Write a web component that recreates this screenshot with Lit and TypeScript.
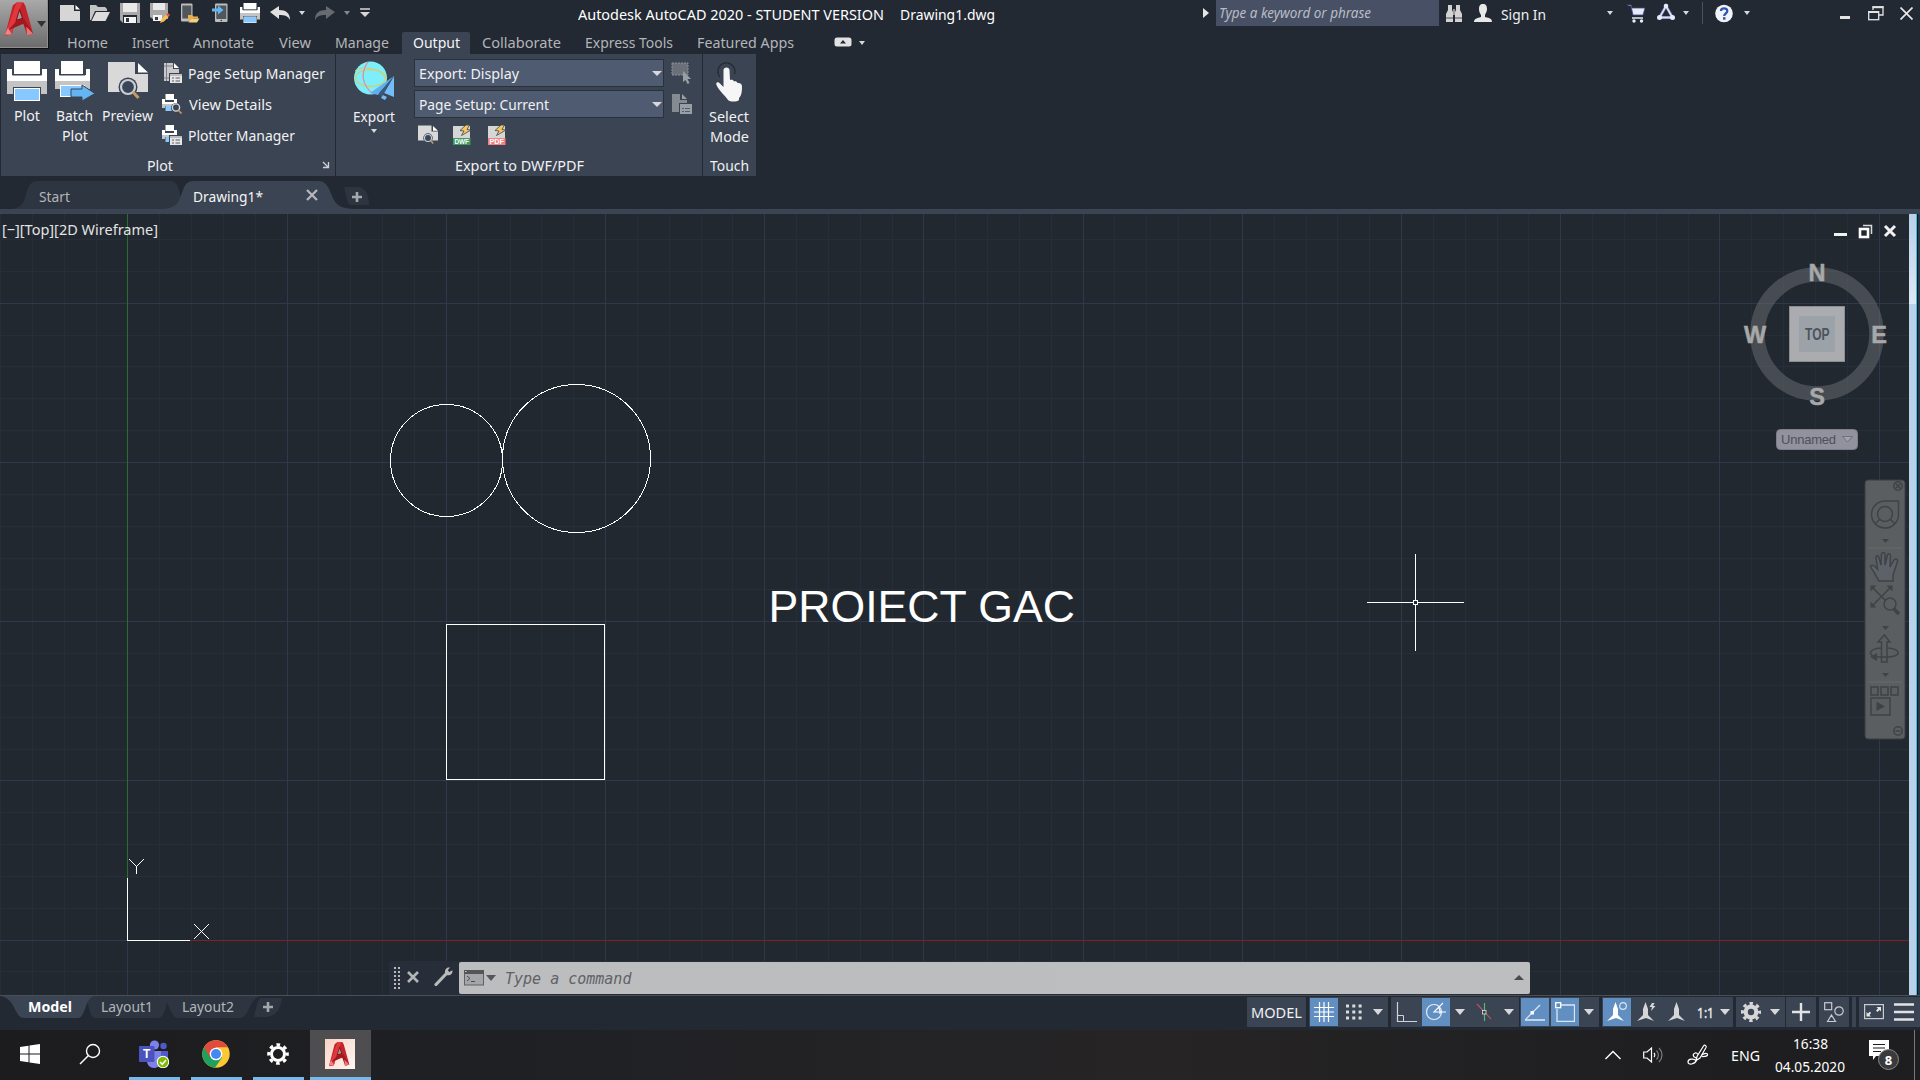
import { LitElement, html, css, svg, TemplateResult, SVGTemplateResult } from "lit";
import { customElement, property, query } from "lit/decorators.js";
import { classMap } from "lit/directives/class-map.js";

/** One line of text squeezed or stretched to a given advance width. */
@customElement("fit-text")
class FitText extends LitElement {
  static styles = css`
    :host { display: inline-block; white-space: nowrap; flex: none; text-align: left; }
    span { display: inline-block; transform-origin: 0 50%; }
  `;
  @property({ type: String }) text = "";
  @property({ type: Number }) w = 0;
  @query("span") private label!: HTMLSpanElement;
  render() {
    return html`<span>${this.text}</span>`;
  }
  updated() {
    this.style.width = `${this.w}px`;
    this.label.style.transform = "none";
    const natural = this.label.getBoundingClientRect().width;
    if (natural > 0) this.label.style.transform = `scaleX(${this.w / natural})`;
  }
}

const t = (text: string, w: number, cls = "") =>
  html`<fit-text class=${cls} .text=${text} .w=${w}></fit-text>`;

const icon = (w: number, h: number, body: SVGTemplateResult, cls = "") =>
  html`<svg class=${cls} width=${w} height=${h} viewBox="0 0 ${w} ${h}" fill="none">${body}</svg>`;

const caret = (w = 6, h = 4, fill = "#d6d8db") =>
  icon(w, h, svg`<path d="M0 0H${w}L${w / 2} ${h}Z" fill=${fill}/>`);

/* ---------- quick access icons (20 x 20) ---------- */
const qNew = icon(20, 20, svg`<path d="M0 2H14V8H20V18H0Z" fill="#d6d6d6"/><path d="M15.500 2L20 6.500H15.500Z" fill="#fff"/>`);
const qOpen = icon(20, 20, svg`<path d="M0 2H6L8 4H15L17 6V8H5L1 17H0Z" fill="#c4c4c4"/><path d="M6 9H20L15.500 18H1.500Z" fill="#dcdcdc"/>`);
const qSave = icon(20, 20, svg`<path d="M0 0H20V20H3L0 17Z" fill="#a9a9a9"/><path d="M3 0H17V9H3Z" fill="#e9e9e9"/><path d="M3 12H17V20H3Z" fill="#222933"/><path d="M4 14H16V20H4Z" fill="#f4f4f4"/><path d="M6 15H9V19H6Z" fill="#333a44"/>`);
const qSaveAs = icon(20, 20, svg`<path d="M0 0H18V16H3L0 14Z" fill="#a9a9a9"/><path d="M3 0H15V7H3Z" fill="#e9e9e9"/><path d="M3 12H12V18H3Z" fill="#f4f4f4"/><path d="M5 14H8V17H5Z" fill="#333a44"/><path d="M10 20L11.500 16L16 11.500L18.500 14L14 18.500Z" fill="#f4bf55"/><path d="M16 11.500L18 10L20 12L18.500 14Z" fill="#e2584b"/>`);
const qOpenWeb = icon(20, 20, svg`<rect x="1" y="0.500" width="11.500" height="18" rx="1" fill="#bdbdbd"/><rect x="2.300" y="2.500" width="9" height="13" fill="#51555c"/><path d="M8 12H12L13.500 13.500H18V15.500H11L8 19Z" fill="#eab04c"/><path d="M12 15.500H19.500L17 19.500H8.500Z" fill="#f6cf7f"/>`);
const qSaveWeb = icon(20, 20, svg`<rect x="5" y="0.500" width="12.500" height="18.500" rx="1" fill="#bdbdbd"/><rect x="6.300" y="2.500" width="10" height="13.500" fill="#51555c"/><path d="M2 5.500H8V2.500L13.500 7L8 11.500V8.500H2Z" fill="#63b5f4"/><circle cx="11.300" cy="17.500" r="0.800" fill="#333"/>`);
const printer = (s: number, extra: SVGTemplateResult = svg``) =>
  html`<svg width=${s} height=${s} viewBox="0 0 40 40" fill="none">
    <path d="M0 8H5V14H35V8H40V20H0Z" fill="#fff"/><path d="M7 0H33V13H7Z" fill="#fff"/>
    <path d="M6 8V14H34V8" stroke="#3b4453" stroke-width="1.200"/>
    <path d="M0 20H40V33H34V26H6V33H0Z" fill="#c4c4c4"/><path d="M7 27H33V40H7Z" fill="#fff"/><path d="M8 28H32V39H8Z" fill="#86c8ff"/>${extra}</svg>`;
const undo = (c: string, flip: boolean) =>
  icon(20, 20, svg`<path transform=${flip ? "matrix(-1 0 0 1 20 0)" : ""} d="M0 9L9 3V7C16 7 20 10 20 17C18 13 15 12 9 12V16Z" fill=${c}/>`);

/* ---------- app logo ---------- */
const logoA = (w: number, h: number) => html`<svg width=${w} height=${h} viewBox="0 0 30 34" fill="none">
  <path d="M8 3L12 0H19L21 3L29 32L23 34L19 22H10L7 33L0 34Z" fill="#c2242b"/>
  <path d="M12 0H18L9 24L7 33L0 34Z" fill="#e0383c"/>
  <path d="M15 6L19 17L11 19Z" fill="#7e1418"/><path d="M15 9L17.500 16L12.500 17.500Z" fill="#a3989a"/>
  <path d="M19 22L3 29L12 19L20 17L29 32L24 33Z" fill="#a3181e"/><path d="M22 25L29 32L23 34Z" fill="#e8767a"/><path d="M3 26L7 33H0Z" fill="#e8898b"/></svg>`;

/* ---------- ribbon icons ---------- */
const sheetLens = (s: number) => html`<svg width=${s} height=${s} viewBox="0 0 40 40" fill="none">
  <path d="M0 1H27V13H40V31H0Z" fill="#d9d9d9"/><path d="M30 2L40 11.500H30Z" fill="#fff"/>
  <circle cx="20" cy="26" r="9.500" fill="#3b4453"/><circle cx="20" cy="26" r="7" fill="#39465a" stroke="#c9ced5" stroke-width="2.200"/>
  <path d="M25 31L30.500 37" stroke="#c79a63" stroke-width="3"/></svg>`;
const listBox = svg`<path d="M7 10H20V20H7Z" fill="#3b4453"/><path d="M8 11H20V20H8Z" fill="#e6e6e6"/><path d="M8 11H20V13H8Z" fill="#bdbdbd"/><path d="M10 15H12M13.500 15H18M10 18H12M13.500 18H18" stroke="#555c68"/>`;
const sPage = icon(20, 20, svg`<path d="M2 0H11V6H17V18H2Z" fill="#c9c9c9"/><path d="M12 0L17 5H12Z" fill="#fff"/><path d="M4.500 0V18M2 3H11M2 15H8" stroke="#7b818b"/>${listBox}`);
const smallPrinter = svg`<path d="M0 5H3V8H12V5H15V10H0Z" fill="#fff"/><path d="M3.500 0H12V6H3.500Z" fill="#fff"/><path d="M0 10H15V14H12V12H3V14H0Z" fill="#c4c4c4"/><path d="M3.500 12H11.500V17H3.500Z" fill="#86c8ff"/>`;
const sView = icon(20, 20, svg`${smallPrinter}<circle cx="14" cy="14" r="5" fill="#3b4453"/><circle cx="14" cy="13.500" r="3.600" stroke="#d3d6da" stroke-width="1.400"/><path d="M16.500 16.500L19.500 19.500" stroke="#c79a63" stroke-width="1.600"/>`);
const sPlotter = icon(20, 20, svg`${smallPrinter}${listBox}`);
const globe = icon(40, 40, svg`<circle cx="16.500" cy="17" r="16.500" fill="#7deefa"/>
  <ellipse cx="16.500" cy="17" rx="15" ry="8.500" stroke="#d3cf72" stroke-width="1.300"/><path d="M1 10C8 5 26 6 32 18" stroke="#d3cf72"/>
  <path d="M14 1C6 12 8 24 19 33" stroke="#e08a9a" stroke-width="1.200"/>
  <path d="M40 15V36L30 32Z" fill="#72bdf6"/><path d="M40 15L16 32L24 34Z" fill="#5eaef0"/><path d="M40 15L25 32L27 37Z" fill="#3b5878"/><path d="M27 37L31 39L33 36L29 34Z" fill="#72bdf6"/>`);
const selRect = icon(22, 22, svg`<rect x="1" y="1" width="16" height="12" fill="#6b7078" stroke="#8d929a" stroke-dasharray="2 1"/><path d="M12 9L20 17H16.500L18.500 21L16.500 22L14.500 18L12 20Z" fill="#9a9fa6"/>`);
const pageOff = icon(22, 22, svg`<path d="M1 1H9V7H16V19H1Z" fill="#868a91"/><path d="M11 1L16 6H11Z" fill="#9a9fa6"/><path d="M8 10H21V21H8Z" fill="#3b4453"/><path d="M9 11H21V21H9Z" fill="#9a9fa6"/><path d="M11 15.500H13M14 15.500H19M11 18.500H13M14 18.500H19" stroke="#555c68"/>`);
const filePub = (label: string, c: string) => html`<svg width="20" height="20" viewBox="0 0 20 20" fill="none">
  <path d="M0 1H17V13H0Z" fill="#d6d6d6"/><path d="M13 0L7 5.500L11 6L8.500 10.500L18 5L14 4.500L16.500 0Z" fill="#f7c75e" stroke="#3b4453" stroke-width="0.800"/>
  <rect x="0" y="13" width="17.500" height="7" fill=${c}/><text class="tag" x="8.700" y="18.900" text-anchor="middle" textLength="14.500" lengthAdjust="spacingAndGlyphs">${label}</text></svg>`;
const hand = icon(28, 42, svg`<path d="M5 16A8.500 8.500 0 1 1 19.500 13" stroke="#262b33" stroke-width="1.300"/>
  <path d="M8.500 9C8.500 5.500 14.500 5.500 14.500 9L15 19C17 18.500 18.500 19 19 20.500C20.500 19.800 22 20.500 22.500 22C24.500 21.500 27 22.500 27 25.500C27 32 26 35 24 37V39C22 41 15 41 13 39C10.500 35 4 30 1.500 24C0.500 21 3 20.500 5 22.500L8.500 26Z" fill="#f6f6f6"/>`);

/* ---------- status bar icons ---------- */
const stGrid = icon(20, 20, svg`<path d="M5.500 0V20M10 0V20M14.500 0V20M0 5.500H20M0 10H20M0 14.500H20" stroke="#fff" stroke-width="1.200"/>`);
const stSnap = icon(16, 16, svg`<path d="M0 2H16M0 8H16M0 14H16" stroke="#dcdcdc" stroke-width="3" stroke-dasharray="3 3.300"/>`);
const stOrtho = icon(22, 22, svg`<path d="M1.500 1V20.500H21" stroke="#cfd2d6" stroke-width="1.200"/><path d="M2 14.500H7.500V20" stroke="#cfd2d6"/>`);
const stPolar = icon(22, 22, svg`<circle cx="9" cy="11" r="7.500" stroke="#e6edf5" stroke-width="1.200"/><path d="M21 11H9L18 2M14 7C15 9 15.500 10 15 13" stroke="#fff" stroke-width="1.100"/>`);
const stIso = icon(18, 20, svg`<path d="M2 2L16 17" stroke="#b75660" stroke-width="1.100"/><path d="M9.500 1V19" stroke="#54b877" stroke-width="1.200"/><rect x="7.500" y="8.500" width="3.500" height="3.500" fill="#3b4453" stroke="#ddd" stroke-width="0.800"/>`);
const stTrack = icon(20, 20, svg`<path d="M0 18H20" stroke="#dbe6f2" stroke-width="1.600"/><path d="M0 18L15 3" stroke="#dbe6f2" stroke-width="1.200"/><rect x="5.500" y="9" width="3.500" height="3.500" fill="#fff"/>`);
const stOsnap = icon(20, 20, svg`<path d="M6 3H19.500V19.500H2V7" stroke="#dbe6f2" stroke-width="1.300"/><rect x="0.700" y="0.700" width="5" height="5" stroke="#fff" stroke-width="1.300"/>`);
const personA = (c: string) => svg`<path d="M8.500 0L11 7V13L17 19L9 16L0 19L6 13V7Z" fill=${c}/>`;
const stAnno = icon(20, 20, svg`${personA("#fff")}<circle cx="16" cy="4" r="3.300" stroke="#dbe6f2" stroke-width="1.200"/>`);
const stAuto = icon(20, 20, svg`${personA("#d6d6d6")}<path d="M15 1L12.500 5H15L14 9L18.500 4H16L17.500 1Z" fill="#d6d6d6"/>`);
const stScale = icon(18, 20, svg`${personA("#d6d6d6")}`);
const gearShape = (c: string, hole: string) => svg`
  <circle cx="10" cy="10" r="8.500" stroke=${c} stroke-width="3.200" stroke-dasharray="3.340 3.340" stroke-dashoffset="1.700"/>
  <circle cx="10" cy="10" r="7.400" fill=${c}/><circle cx="10" cy="10" r="3.200" fill=${hole}/>`;
const stGear = icon(20, 20, gearShape("#d6d6d6", "#3b4453"));
const stPlus = icon(20, 20, svg`<path d="M10 1V19M1 10H19" stroke="#e3e3e3" stroke-width="2.400"/>`);
const stShapes = icon(20, 20, svg`<rect x="0.700" y="0.700" width="7" height="7" stroke="#c9ccd0" stroke-width="1.200"/><circle cx="15" cy="9" r="4.200" stroke="#c9ccd0" stroke-width="1.200"/><path d="M7.500 13L11.500 19.500H3.500Z" stroke="#c9ccd0" stroke-width="1.200"/>`);
const stFull = icon(20, 16, svg`<rect x="0.600" y="0.600" width="18.800" height="14" stroke="#c9ccd0" stroke-width="1.200"/><path d="M12.500 3H17V7.500L15.500 6L13.500 8L12 6.500L14 4.500ZM2.500 8L4 9.500L6 7.500L7 9L5.500 11L7 12.500H2.500Z" fill="#e6e6e6"/>`);
const stMenu = icon(20, 18, svg`<path d="M0 1.500H20M0 9H20M0 16.500H20" stroke="#e3e3e3" stroke-width="2.400"/>`);

/* ---------- taskbar icons ---------- */
const tbStart = icon(20, 20, svg`<path d="M0 3L8.500 1.800V9.500H0ZM9.500 1.600L20 0V9.500H9.500ZM0 10.500H8.500V18.200L0 17ZM9.500 10.500H20V20L9.500 18.400Z" fill="#fff"/>`);
const tbSearch = icon(22, 22, svg`<circle cx="14" cy="8" r="6.500" stroke="#fff" stroke-width="1.400"/><path d="M9.500 12.500L1 21" stroke="#fff" stroke-width="1.500"/>`);
const tbTeams = icon(30, 28, svg`<circle cx="15.500" cy="5" r="4.600" fill="#7b83eb"/><circle cx="24.500" cy="6" r="3.200" fill="#5059c9"/><path d="M20 11H29V19C29 22 27 24 24 24H20Z" fill="#5059c9"/><path d="M8 11H22V21C22 26 18 28 15 28C11 28 8 25 8 21Z" fill="#7b83eb"/>
  <rect x="0" y="6" width="15.500" height="16" rx="1" fill="#4b53bc"/><text class="teams" x="7.700" y="18" text-anchor="middle">T</text>
  <circle cx="24" cy="22" r="6.200" fill="#fff"/><circle cx="24" cy="22" r="5.200" fill="#7fba00"/><path d="M21 22L23.300 24.300L27 20" stroke="#fff" stroke-width="1.500"/>`);
const tbChrome = icon(28, 28, svg`<circle cx="14" cy="14" r="13.700" fill="#fcc934"/><path d="M14 14L2.100 7.150A13.700 13.700 0 0 0 13 27.650L20 17.500Z" fill="#1fa15d"/><path d="M2.100 7.150A13.700 13.700 0 0 1 25.900 7.150H14L8 17.300Z" fill="#e04a3f"/><circle cx="14" cy="14" r="6.300" fill="#fff"/><circle cx="14" cy="14" r="5" fill="#4688f1"/>`);
const tbGear = icon(22, 22, svg`<circle cx="11" cy="11" r="9.300" stroke="#fff" stroke-width="3" stroke-dasharray="3.650 3.650" stroke-dashoffset="1.800"/><circle cx="11" cy="11" r="6.500" stroke="#fff" stroke-width="3"/>`);
const trChevron = icon(16, 10, svg`<path d="M0.500 9L8 1.500L15.500 9" stroke="#fff" stroke-width="1.400"/>`);
const trSpeaker = icon(20, 18, svg`<path d="M0.700 6H4L8.500 2V16L4 12H0.700Z" stroke="#fff" stroke-width="1.200"/><path d="M11 7C12 8 12 10 11 11" stroke="#fff" stroke-width="1.200"/><path d="M13.500 4.500C16 7 16 11 13.500 13.500M16 2C20 6 20 12 16 16" stroke="#7d7d7d" stroke-width="1.200"/>`);
const trPen = icon(22, 22, svg`<path d="M9 16.500L10 12.500L16.500 2C17.500 0.500 20 1.500 19 3.500L13 14Z" stroke="#fff" stroke-width="1.200"/><path d="M11 10.500C9 7.500 5.500 9.500 6.500 12C7.500 14.500 10.500 12.500 9.500 16C8 20.500 1 21.500 1 18C1 14.500 7 14.500 9 16.500M15 11C17 9 21 8.500 20.500 11C20 13 16 12.500 14.500 12.500" stroke="#fff" stroke-width="1.200"/>`);
const trNote = icon(30, 32, svg`<path d="M0 1H20V17H7L4 21V17H0Z" fill="#fff"/><path d="M4 5.500H16M4 9H16M4 12.500H12" stroke="#1d1d1f" stroke-width="1.200"/><circle cx="19.500" cy="20.500" r="10" fill="#3a3a3c" stroke="#8a8a8a"/><text class="count" x="19.500" y="25.500" text-anchor="middle">8</text>`);

/* ---------- drawing area (canvas origin at window y = 214) ---------- */
const PITCH = 159.2;
const gridLines = () => {
  const out: SVGTemplateResult[] = [];
  for (const major of [false, true]) {
    const cls = major ? "major" : "minor";
    for (let i = -4; i <= 56; i++) {
      if ((i % 5 === 0) !== major) continue;
      const x = Math.round(127.45 + (i * PITCH) / 5) + 0.5;
      if (x < 1909) out.push(svg`<path class=${cls} d="M${x} 0V781"/>`);
    }
    for (let i = -1; i <= 22; i++) {
      if ((i % 5 === 0) !== major) continue;
      const y = Math.round(725.6 - (i * PITCH) / 5) + 0.5;
      if (y > 0) out.push(svg`<path class=${cls} d="M0 ${y}H1909"/>`);
    }
  }
  return out;
};

@customElement("drawing-view")
class DrawingView extends LitElement {
  static styles = css`
    :host { display: grid; height: 781px; background: #212830; position: relative; overflow: hidden; font: 15px/20px "Noto Sans", sans-serif; }
    .space { grid-area: 1 / 1; display: block; }
    .space path, .space rect { shape-rendering: crispEdges; }
    .minor { stroke: #262e39; }
    .major { stroke: #303849; }
    .ent { stroke: #fff; fill: none; }
    circle.ent { shape-rendering: crispEdges; }
    .proj { font: 44.500px "Liberation Sans", Arial, sans-serif; fill: #fff; }
    .label { position: absolute; left: 2px; top: 5px; color: #e4e4e4; }
    .cube { position: absolute; left: 1740px; top: 42px; }
    .cube text { font: bold 23.500px "Liberation Sans", Arial, sans-serif; fill: #a8a8a8; }
    .cube .dir text { stroke: #a8a8a8; stroke-width: 0.500px; }
    .cube .top { font: bold 16px "Liberation Sans", Arial, sans-serif; fill: #4c535c; }
    .cube .ucs { font: 13px "Liberation Sans", Arial, sans-serif; fill: #4d4f5a; }
    .wins { position: absolute; left: 1832px; top: 10px; }
    .nav { position: absolute; left: 1864px; top: 265px; }
    .cmd { position: absolute; left: 389px; top: 747px; width: 1141px; height: 34px; background: #282e39; border-radius: 3px 0 0 0; display: flex; align-items: center; }
    .tools { width: 70px; display: flex; align-items: center; padding-left: 5px; box-sizing: border-box; }
    .tools svg { margin-bottom: 1px; }
    .tools svg:nth-child(2) { margin-left: 7px; margin-bottom: 2px; }
    .tools svg:nth-child(3) { margin-left: 15px; margin-bottom: 3px; }
    .entry { flex: 1; height: 32px; margin-bottom: 1px; background: linear-gradient(90deg, #bcbdbf, #bdbec0); border-radius: 2px; display: flex; align-items: center; gap: 2px; padding: 0 6px 0 5px; box-sizing: border-box; }
    .entry .ph { margin-left: 7px; padding-top: 2px; flex: 1; font: italic 15px/20px "DejaVu Sans Mono", monospace; color: #616265; }
  `;
  render() {
    return html`
      <svg class="space" width="1920" height="781" viewBox="0 0 1920 781" fill="none">
        <defs><linearGradient id="sb" x1="0" x2="0" y1="0" y2="1"><stop offset="0" stop-color="#b9d0ea"/><stop offset="1" stop-color="#dde8f4"/></linearGradient></defs>
        ${gridLines()}
        <path d="M127.500 0V674" stroke="#25702d"/><path d="M190 726.500H1909" stroke="#7b2428"/>
        <path class="ent" d="M127.500 664V726.500H190"/>
        <path class="ent" d="M129 645L136.500 652.500V660M136.500 652.500L144 645M194 710L209 725M209 710L194 725"/>
        <circle class="ent" cx="446.500" cy="246.500" r="56"/><circle class="ent" cx="576.500" cy="244.500" r="74"/>
        <rect class="ent" x="446.500" y="410.500" width="158" height="155"/>
        <text class="proj" x="768.500" y="407.500" textLength="306.500" lengthAdjust="spacingAndGlyphs">PROIECT GAC</text>
        <path class="ent" d="M1367 388.500H1413M1418 388.500H1464M1415.500 340V386M1415.500 391V437"/>
        <rect class="ent" x="1413.500" y="386.500" width="4" height="4"/>
        <rect x="1909" y="0" width="7" height="781" fill="#bad1ea"/><rect x="1909" y="0" width="7" height="90" fill="url(#sb)"/>
        <rect x="1916" y="0" width="1" height="781" fill="#28c4f0"/><rect x="1917" y="0" width="1" height="781" fill="#10141a"/><rect x="1918" y="0" width="2" height="781" fill="#2d3543"/>
      </svg>
      ${t("[−][Top][2D Wireframe]", 156, "label")}
      ${icon(68, 18, svg`<rect x="2" y="9" width="13" height="3" fill="#f2f2f2"/>
        <path d="M31 1.500H39.500V10" stroke="#dcdcdc" stroke-width="1.500"/><rect x="28" y="5" width="8" height="8" stroke="#fff" stroke-width="2.600"/>
        <path d="M53 2L63 12M63 2L53 12" stroke="#f2f2f2" stroke-width="3"/>`, "wins")}
      <svg class="cube" width="160" height="200" viewBox="0 0 160 200" fill="none">
        <circle cx="77" cy="78" r="59.500" stroke="#6a6e73" stroke-opacity="0.530" stroke-width="14.500"/>
        <g class="dir"><text x="77" y="25" text-anchor="middle">N</text><text x="77" y="148.500" text-anchor="middle">S</text>
        <text x="15" y="87" text-anchor="middle">W</text><text x="139" y="87" text-anchor="middle">E</text></g>
        <rect x="49.500" y="50.500" width="55" height="55" fill="#aaacaf" stroke="#8a8d91"/><rect x="59" y="60" width="36" height="36" fill="#9ba3a8"/>
        <text class="top" x="65" y="84" textLength="24.500" lengthAdjust="spacingAndGlyphs">TOP</text>
        <rect x="36.500" y="173.500" width="81" height="20" rx="4" fill="#91929e" stroke="#7d7e8a"/>
        <text class="ucs" x="41" y="188" textLength="55" lengthAdjust="spacing">Unnamed</text>
        <path d="M102.500 180.500H112.500L107.500 186Z" fill="#a0a2b0" stroke="#6f7180"/>
      </svg>
      <svg class="nav" width="42" height="262" viewBox="0 0 42 262" fill="none" stroke="#3f4347" stroke-width="1.500">
        <rect x="1" y="1" width="40" height="259" rx="3" fill="#5a5e61" stroke="#3a3e42" stroke-width="1"/>
        <circle cx="34" cy="7" r="4.200"/><path d="M31.500 4.500L36.500 9.500M36.500 4.500L31.500 9.500"/>
        <path d="M21 22H34.500V36A13.500 13.500 0 1 1 21 22Z"/><circle cx="21" cy="35" r="7.500"/><path d="M15.500 40.500L11 45M26.500 40.500L31 45"/>
        <path d="M18 60H25L21.500 64Z" fill="#3f4347" stroke="none"/><path d="M4 69H38" stroke="#666a6e" stroke-width="1"/>
        <path d="M12 97C10 91 7 91 6.500 87C8 85 11 87 13.500 90L12 79C12 76 14.500 76 15 79L17 86L17.500 75C18 73 20.500 73 21 75V86L23.500 76C24 74 26.500 74.500 26.500 77L26 88L30 81C32 79 34 80.500 33.500 82.500L29 96V102H15Z" fill="#5d6168"/>
        <g transform="translate(0 2)"><path d="M8 125L27 106M8 106L22 120" stroke-width="1.600"/><path d="M6.500 104.500H12.500L6.500 110.500ZM28.500 104.500V110.500L22.500 104.500ZM6.500 126.500V120.500L12.500 126.500Z" fill="#3f4347" stroke="none"/>
        <circle cx="26" cy="123" r="6"/><path d="M30 128L35 133" stroke-width="3.500"/></g>
        <path d="M18 147H25L21.500 151Z" fill="#3f4347" stroke="none"/>
        <g transform="translate(0 2)"><path d="M17.500 181V161H14L20.500 154L26 161H23V181Z"/><path d="M17 167C4 168 3 175 14 176H22C38 176 38 168 24 167"/><path d="M13 172V180L6 176Z" fill="#3f4347" stroke="none"/></g>
        <path d="M18 194H25L21.500 198Z" fill="#3f4347" stroke="none"/><path d="M4 203H38" stroke="#666a6e" stroke-width="1"/>
        <rect x="7" y="208" width="7" height="8"/><rect x="17" y="208" width="7" height="8"/><rect x="27" y="208" width="7" height="8"/>
        <rect x="7" y="219" width="19" height="17"/><path d="M12.500 222.500V232L21 227.500Z" fill="#3f4347" stroke="none"/>
        <circle cx="34" cy="252" r="4.200"/><path d="M31.500 252H36.500"/>
      </svg>
      <div class="cmd">
        <div class="tools">
          ${icon(6, 22, svg`<path d="M1 0V22M5 0V22" stroke="#b9babc" stroke-width="2" stroke-dasharray="2 2"/>`)}
          ${icon(12, 12, svg`<path d="M1 1L11 11M11 1L1 11" stroke="#b4b5b7" stroke-width="2.600"/>`)}
          ${icon(19, 19, svg`<path d="M2 17.500L12 7" stroke="#b9babc" stroke-width="3.200" stroke-linecap="round"/><path d="M11 6C10.500 2 13 0 16 0.500L13.800 3.300L15.300 5L18.400 3.200C19 7 16 9 12.500 8Z" fill="#b9babc"/>`)}
        </div>
        <div class="entry">
          ${icon(20, 16, svg`<rect x="0.500" y="0.500" width="19" height="14.500" fill="#a5a6a9" stroke="#606165"/><path d="M0 0H20V4H0Z" fill="#545559"/><path d="M3 6L6 8.500L3 11M7 11.500H11" stroke="#4c4d50"/><path d="M1 1.500H2.500" stroke="#ccc"/>`)}
          ${caret(10, 6, "#55565a")}
          <span class="ph">Type a command</span>
          ${icon(10, 5, svg`<path d="M0 5H10L5 0Z" fill="#4a4b4e"/>`)}
        </div>
      </div>
    `;
  }
}

@customElement("app-root")
class AppRoot extends LitElement {
  static styles = css`
    :host { display: flex; flex-direction: column; width: 1920px; height: 1080px; overflow: hidden; background: #222933; color: #f0f1f2; font: 15px/20px "Noto Sans", sans-serif; }
    svg { display: block; flex: none; }
    .c { display: flex; align-items: center; justify-content: center; flex: none; }
    header { display: grid; grid-template-columns: 50px 1fr; height: 54px; }
    .app { width: 49px; height: 49px; box-sizing: border-box; background: linear-gradient(#a9a9a9, #6b6b6b); border-right: 1px solid #111; border-bottom: 1px solid #111; box-shadow: inset -1px -1px #8f8f8f; display: flex; align-items: flex-start; gap: 3px; padding: 2px 0 0 5px; }
    .app svg:last-child { margin-top: 19px; }
    .top { display: flex; height: 26px; align-items: center; }
    .qa { display: flex; align-items: center; padding-left: 5px; width: 528px; box-sizing: border-box; }
    .q30 { width: 30px; } .q14 { width: 14px; } .q32 { width: 32px; } .q12 { width: 12px; } .q24 { width: 24px; }
    .ttl { padding-top: 2px; color: #fff; }
    .ttl + .ttl { margin-left: 16px; }
    .tri { width: 13px; margin-left: 208px; justify-content: flex-start; }
    .search { width: 223px; height: 26px; background: #475064; display: flex; align-items: center; padding-left: 3px; box-sizing: border-box; font-size: 13.500px; font-style: italic; color: #b9bdc5; }
    .sign { margin-left: 4px; padding-top: 1px; }
    .info { display: flex; align-items: center; }
    .q28 { width: 28px; } .q20 { width: 20px; } .q16 { width: 16px; }
    .signcaret { margin-left: 54px; }
    .bar { width: 1px; height: 22px; background: #4a525f; margin: 0 6px 0 10px; }
    .winbtns { display: flex; margin-left: auto; }
    .tabs { display: flex; height: 22px; margin-top: 6px; color: #b3b5b8; align-items: center; }
    .tabs fit-text { margin-left: 24px; padding-bottom: 2px; }
    .tabs .on { background: #3b4453; border-radius: 2px 2px 0 0; width: 68px; height: 22px; margin-left: 13px; color: #f4f4f4; }
    .tabs .on fit-text { margin: 0; }
    .tabs .first { margin-left: 17px; } .tabs .after { margin-left: 12px; } .tabs .view { margin-left: 25px; }
    .pill { margin: 0 7px 2px 40px; }
    .ribbon { display: flex; gap: 1px; padding-left: 1px; height: 122px; }
    .panel { background: #3b4453; display: flex; flex-direction: column; height: 122px; }
    .panel.p1 { width: 334px; } .panel.p2 { width: 366px; } .panel.p3 { width: 53px; }
    .body { display: flex; height: 101px; }
    .pt { display: flex; justify-content: center; align-items: center; height: 21px; padding-bottom: 1px; box-sizing: border-box; }
    .pt.lead { display: grid; grid-template-columns: 318px 3px 13px; justify-items: start; }
    .pt.lead fit-text { justify-self: center; }
    .pt.lead svg { grid-column: 3; }
    .big { display: flex; flex-direction: column; align-items: center; padding-top: 7px; box-sizing: border-box; }
    .big .lab { margin-top: 4px; display: flex; flex-direction: column; align-items: center; }
    .b1 { width: 52px; } .b2 { width: 43px; } .b3 { width: 66px; padding-right: 3px; } .b4 { width: 78px; padding-right: 3px; }
    .b4 .lab { margin-top: 5px; gap: 3px; } .b5 { width: 52px; } .b5 .lab { margin-top: 3px; }
    .rows { display: flex; flex-direction: column; padding-top: 3px; }
    .row { height: 31px; display: flex; align-items: center; gap: 6px; }
    .row svg { margin-top: 1px; }
    .row.view { gap: 7px; }
    .ex { display: grid; grid-template-columns: 250px 36px; row-gap: 3px; padding-top: 5px; grid-auto-rows: 28px; }
    .combo { background: #4f5b70; border: 1px solid #2a313d; box-sizing: border-box; display: flex; align-items: center; justify-content: space-between; padding: 0 1px 0 4px; }
    .off { display: flex; align-items: center; justify-content: center; }
    .pub { display: flex; gap: 15px; padding-left: 4px; align-items: flex-start; padding-top: 4px; }
    .tag { font: bold 6.500px "Liberation Sans", sans-serif; fill: #fff; }
    .files { display: flex; height: 28px; margin-top: 5px; padding-left: 20px; }
    .ft { display: grid; width: 162px; height: 28px; }
    .ft > svg { grid-area: 1 / 1; overflow: visible; }
    .ft > .in { grid-area: 1 / 1; display: flex; align-items: center; padding: 2px 22px 0 19px; justify-content: space-between; z-index: 1; }
    .ft.two { margin-left: -8px; width: 180px; }
    .ft.two > .in { padding-left: 19px; padding-right: 36px; color: #f4f4f4; }
    .ft.two > .in > svg { margin-bottom: 2px; }
    .ft.three { width: 26px; margin-left: -10px; }
    .ft .dim { color: #b3b5b8; }
    .band { height: 5px; background: #3b4453; }
    .status { border-top: 1px solid #4a4f57; height: 34px; display: flex; justify-content: space-between; }
    .lay { display: grid; }
    .lay > svg, .lay > .names { grid-area: 1 / 1; }
    .names { display: flex; height: 20px; align-items: center; padding-left: 28px; color: #b3b5b8; z-index: 1; }
    .names .model { font-weight: bold; color: #fff; }
    .names .l1 { margin-left: 29px; } .names .l2 { margin-left: 29px; }
    .names svg { margin: 2px 0 0 29px; }
    .st { display: flex; padding-top: 1px; height: 30px; }
    .grp { display: flex; background: #3b4453; height: 30px; align-items: center; margin-left: 3px; }
    .cell { display: flex; align-items: center; justify-content: center; height: 28px; flex: none; }
    .cell.act { background: #618fc1; }
    .tight { margin-left: 1px; }
    .one { -webkit-text-stroke: 0.300px #f0f1f2; }
    .task { height: 50px; background: linear-gradient(90deg, #1c1c1e, #202125 30%, #262425 60%, #1e1e20 90%); display: flex; align-items: center; justify-content: space-between; }
    .apps, .tray { display: flex; height: 50px; }
    .apps .it { display: flex; align-items: center; justify-content: center; box-sizing: border-box; border-bottom: 3px solid transparent; padding-right: 2px; }
    .apps .run { border-color: #76b9ed; width: 51px; margin-right: 11px; }
    .apps .i1 { width: 60px; padding-right: 0; } .i2 { width: 62px; margin-right: 7px; }
    .apps .cur { background: #4e4e50; width: 61px; margin-left: -5px; }
    .tile { width: 30px; height: 30px; background: linear-gradient(135deg, #f7d2c4, #fff7f3); display: flex; align-items: center; justify-content: center; }
    .teams { font: bold 12px "Liberation Sans", sans-serif; fill: #fff; }
    .count { font: bold 13px "Noto Sans", sans-serif; fill: #fff; }
    .tray { align-items: center; color: #fff; }
    .clock { display: flex; flex-direction: column; align-items: center; gap: 3px; margin: 0 24px 0 8px; padding-bottom: 2px; }
    .edge { width: 1px; height: 50px; background: #77787a; margin: 0 5px 0 15px; }
  `;

  private cell(w: number, body: unknown, act = false): TemplateResult {
    return html`<div class=${classMap({ cell: true, act })} style="width:${w}px">${body}</div>`;
  }

  private header() {
    return html`<header>
      <div class="app">${logoA(29, 34)}${caret(9, 6, "#333")}</div>
      <div>
        <div class="top">
          <div class="qa">
            ${[qNew, qOpen, qSave, qSaveAs, qOpenWeb, qSaveWeb, printer(20), undo("#e0e0e0", false)].map((i) => html`<div class="c q30">${i}</div>`)}
            <div class="c q14">${caret()}</div><div class="c q32">${undo("#676b70", true)}</div><div class="c q12">${caret(6, 4, "#85888d")}</div>
            <div class="c q24">${icon(10, 10, svg`<path d="M0 1H10" stroke="#d6d6d6" stroke-width="1.500"/><path d="M0 4H10L5 9Z" fill="#d6d6d6"/>`)}</div>
          </div>
          ${t("Autodesk AutoCAD 2020 - STUDENT VERSION", 306, "ttl")}${t("Drawing1.dwg", 95, "ttl")}
          <div class="c tri">${icon(6, 10, svg`<path d="M0 0L6 5L0 10Z" fill="#e6e6e6"/>`)}</div>
          <div class="search">${t("Type a keyword or phrase", 152)}</div>
          <div class="c q30">${icon(18, 20, svg`<path d="M3 2H7V7L8 9V19H1V11L3 7ZM11 2H15V7L17 11V19H10V9L11 7Z" fill="#d3d3d3"/><path d="M8 6H10V12H8Z" fill="#999"/><path d="M1 15H8M10 15H17" stroke="#4a4f57"/>`)}</div>
          <div class="c q28">${icon(18, 20, svg`<path d="M9 1C12 1 13 3 13 6C13 9 11.500 10.500 11 12V14C16 15 18 16 18 19H0C0 16 3 15 7 14V12C6 10.500 5 9 5 6C5 3 6 1 9 1Z" fill="#e8e8e8"/>`)}</div>
          ${t("Sign In", 45, "sign")}
          <div class="info">
            <div class="c q20 signcaret">${caret()}</div>
            <div class="c q32">${icon(18, 20, svg`<path d="M0 2H4L5 5H18L16 12H6L4 3" fill="#e8ebf5" stroke="#3a4a8c" stroke-width="0.800"/><path d="M5 15H16" stroke="#e8ebf5" stroke-width="1.500"/><circle cx="7" cy="18" r="1.700" fill="#e8ebf5"/><circle cx="14.500" cy="18" r="1.700" fill="#e8ebf5"/>`)}</div>
            <div class="c q28">${icon(20, 20, svg`<path d="M10 3L16.500 14.500H3.500Z" stroke="#5a68a8" stroke-width="3"/><path d="M10 3L16.500 14.500H3.500Z" stroke="#d9def0" stroke-width="1.800"/><circle cx="10" cy="3" r="2.300" fill="#e8ebf5"/><circle cx="3.500" cy="14.500" r="2.500" fill="#e8ebf5"/><circle cx="16.500" cy="14.500" r="2.500" fill="#e8ebf5"/>`)}</div>
            <div class="c q12">${caret()}</div><div class="bar"></div>
            <div class="c q30">${icon(18, 19, svg`<circle cx="9" cy="9.500" r="8.800" fill="#f1f3f7"/><path d="M6 7C6 3.500 12.300 3.500 12.300 7C12.300 9.500 9.200 9.500 9.200 12" stroke="#3056b0" stroke-width="2.300"/><rect x="8" y="13.200" width="2.500" height="2.500" fill="#3056b0"/>`)}</div>
            <div class="c q16">${caret()}</div>
          </div>
          <div class="winbtns">
            <div class="c q30">${icon(10, 14, svg`<path d="M0 10H10V13H0Z" fill="#e3e3e3"/>`)}</div>
            <div class="c q32">${icon(16, 15, svg`<path d="M5 4V1H15V9H11" stroke="#e3e3e3" stroke-width="1.300"/><path d="M4.500 1.200H15.500" stroke="#e3e3e3" stroke-width="2"/><rect x="0.700" y="5.700" width="10" height="8" stroke="#e3e3e3" stroke-width="1.300"/><path d="M0 6H11" stroke="#e3e3e3" stroke-width="2"/>`)}</div>
            <div class="c q28">${icon(13, 13, svg`<path d="M0.500 0.500L12.500 12.500M12.500 0.500L0.500 12.500" stroke="#e6e6e6" stroke-width="1.700"/>`)}</div>
          </div>
        </div>
        <div class="tabs">
          ${t("Home", 41, "first")}${t("Insert", 37)}${t("Annotate", 61)}${t("View", 32, "view")}${t("Manage", 54)}
          <div class="c on">${t("Output", 47)}</div>
          ${t("Collaborate", 79, "after")}${t("Express Tools", 88)}${t("Featured Apps", 97)}
          <div class="pill">${icon(18, 10, svg`<rect x="0.500" y="0.500" width="17" height="9" rx="2.500" fill="#e2e2e2"/><path d="M6 6.500H12L9 3Z" fill="#222933"/>`)}</div>${caret()}
        </div>
      </div>
    </header>`;
  }

  private ribbon() {
    const batch = html`<svg width="40" height="40" viewBox="0 0 40 40" fill="none"><path d="M0 8H4V14H31V8H35V20H0Z" fill="#fff"/><path d="M6 0H28V13H6Z" fill="#fff"/><path d="M5 8V14H29.500V8" stroke="#3b4453" stroke-width="1.200"/><path d="M0 20H35V28H0Z" fill="#c4c4c4"/><path d="M5 24H30V36H5Z" fill="#fff"/><path d="M6 25H30V35H6Z" fill="#86c8ff"/><path d="M16 28H27V24L40 32.500L27 40V36H16Z" fill="#63b5f4" stroke="#3b4453"/></svg>`;
    return html`<div class="ribbon">
      <div class="panel p1">
        <div class="body">
          <div class="big b1">${printer(40)}<div class="lab">${t("Plot", 26)}</div></div>
          <div class="big b2">${batch}<div class="lab">${t("Batch", 37)}${t("Plot", 26)}</div></div>
          <div class="big b3">${sheetLens(40)}<div class="lab">${t("Preview", 51)}</div></div>
          <div class="rows">
            <div class="row">${sPage}${t("Page Setup Manager", 137)}</div>
            <div class="row view">${sView}${t("View Details", 83)}</div>
            <div class="row">${sPlotter}${t("Plotter Manager", 107)}</div>
          </div>
        </div>
        <div class="pt lead">${t("Plot", 26)}${icon(8, 8, svg`<path d="M1 1L6 6M6.500 1V6.500H1" stroke="#d0d2d5" stroke-width="1.300"/>`)}</div>
      </div>
      <div class="panel p2">
        <div class="body">
          <div class="big b4">${globe}<div class="lab">${t("Export", 42)}${caret()}</div></div>
          <div class="ex">
            <div class="combo">${t("Export: Display", 100)}${caret(10, 5)}</div><div class="off">${selRect}</div>
            <div class="combo">${t("Page Setup: Current", 130)}${caret(10, 5)}</div><div class="off">${pageOff}</div>
            <div class="pub">${sheetLens(20)}${filePub("DWF", "#3f9b5f")}${filePub("PDF", "#f77f82")}</div>
          </div>
        </div>
        <div class="pt">${t("Export to DWF/PDF", 129)}</div>
      </div>
      <div class="panel p3">
        <div class="body"><div class="big b5">${hand}<div class="lab">${t("Select", 40)}${t("Mode", 39)}</div></div></div>
        <div class="pt">${t("Touch", 39)}</div>
      </div>
    </div>`;
  }

  private files() {
    return html`<div class="files">
      <div class="ft">${icon(162, 28, svg`<path d="M-12 28C4 28 4 20 7 10C9 3 12 0 18 0H150C158 0 160 8 162 28Z" fill="#2d3541"/>`)}
        <div class="in dim">${t("Start", 31)}</div></div>
      <div class="ft two">${icon(180, 28, svg`<path d="M-14 28C6 28 5 18 9 9C11 3 14 0 20 0H144C151 0 154 5 156 10C161 22 162 28 184 28Z" fill="#3b4453"/>`)}
        <div class="in">${t("Drawing1*", 70)}${icon(12, 12, svg`<path d="M1 1L11 11M11 1L1 11" stroke="#b4b7bb" stroke-width="2.300"/>`)}</div></div>
      <div class="ft three">${icon(26, 28, svg`<path d="M0 6H14C22 7 25 14 25 24H6C2 20 2 12 0 6Z" fill="#2d3541"/><path d="M13 11V21M8 16H18" stroke="#a4a7ac" stroke-width="2.600"/>`)}</div>
    </div>
    <div class="band"></div>`;
  }

  private statusBar() {
    const c = (w: number, b: unknown, a = false) => this.cell(w, b, a);
    return html`<div class="status">
      <div class="lay">
        ${icon(290, 24, svg`<path d="M172 0H262C248 2 250 22 240 22H178C170 22 170 2 158 0Z" fill="#2d3541"/><path d="M88 0H170C165 6 166 22 158 22H96C88 22 90 6 84 0Z" fill="#2d3541"/>
          <path d="M0 0H95C84 2 86 22 78 22H24C14 22 16 2 0 0Z" fill="#3b4453"/><path d="M260 2H282C280 14 276 20 266 21H254C256 14 256 8 260 2Z" fill="#2d3541"/>`)}
        <div class="names">${t("Model", 44, "model")}${t("Layout1", 52, "l1")}${t("Layout2", 52, "l2")}
          ${icon(10, 10, svg`<path d="M5 0V10M0 5H10" stroke="#a4a7ac" stroke-width="2.600"/>`)}</div>
      </div>
      <div class="st">
        <div class="grp">${c(59, t("MODEL", 51))}</div>
        <div class="grp">${c(1, "")}${c(28, stGrid, true)}${c(31, stSnap)}${c(18, caret(10, 6))}${c(1, "")}</div>
        <div class="grp">${c(31, stOrtho)}${c(28, stPolar, true)}${c(20, caret(10, 6))}${c(28, stIso)}${c(21, caret(10, 6))}</div>
        <div class="grp tight">${c(1, "")}${c(28, stTrack, true)}${c(2, "")}${c(28, stOsnap, true)}${c(20, caret(10, 6))}</div>
        <div class="grp">${c(1, "")}${c(28, stAnno, true)}${c(32, stAuto)}${c(28, stScale)}${c(29, t("1:1", 17, "one"))}${c(9, caret(10, 6))}${c(4, "")}</div>
        <div class="grp">${c(29, stGear)}${c(20, caret(10, 6))}</div>
        <div class="grp tight">${c(30, stPlus)}</div>
        <div class="grp">${c(30, stShapes)}</div>
        <div class="grp">${c(4, "")}</div>
        <div class="grp">${c(30, stFull)}${c(30, stMenu)}${c(1, "")}</div>
      </div>
    </div>`;
  }

  private taskbar() {
    return html`<div class="task">
      <div class="apps">
        <div class="it i1">${tbStart}</div><div class="it i2">${tbSearch}</div>
        <div class="it run">${tbTeams}</div><div class="it run">${tbChrome}</div><div class="it run">${tbGear}</div>
        <div class="it run cur"><div class="tile">${logoA(21, 24)}</div></div>
      </div>
      <div class="tray">
        ${this.cell(40, trChevron)}${this.cell(40, trSpeaker)}${this.cell(50, trPen)}${this.cell(44, t("ENG", 29))}
        <div class="clock">${t("16:38", 35)}${t("04.05.2020", 70)}</div>
        ${trNote}
        <div class="edge"></div>
      </div>
    </div>`;
  }

  render() {
    return html`${this.header()}${this.ribbon()}${this.files()}<drawing-view></drawing-view>${this.statusBar()}${this.taskbar()}`;
  }
}
